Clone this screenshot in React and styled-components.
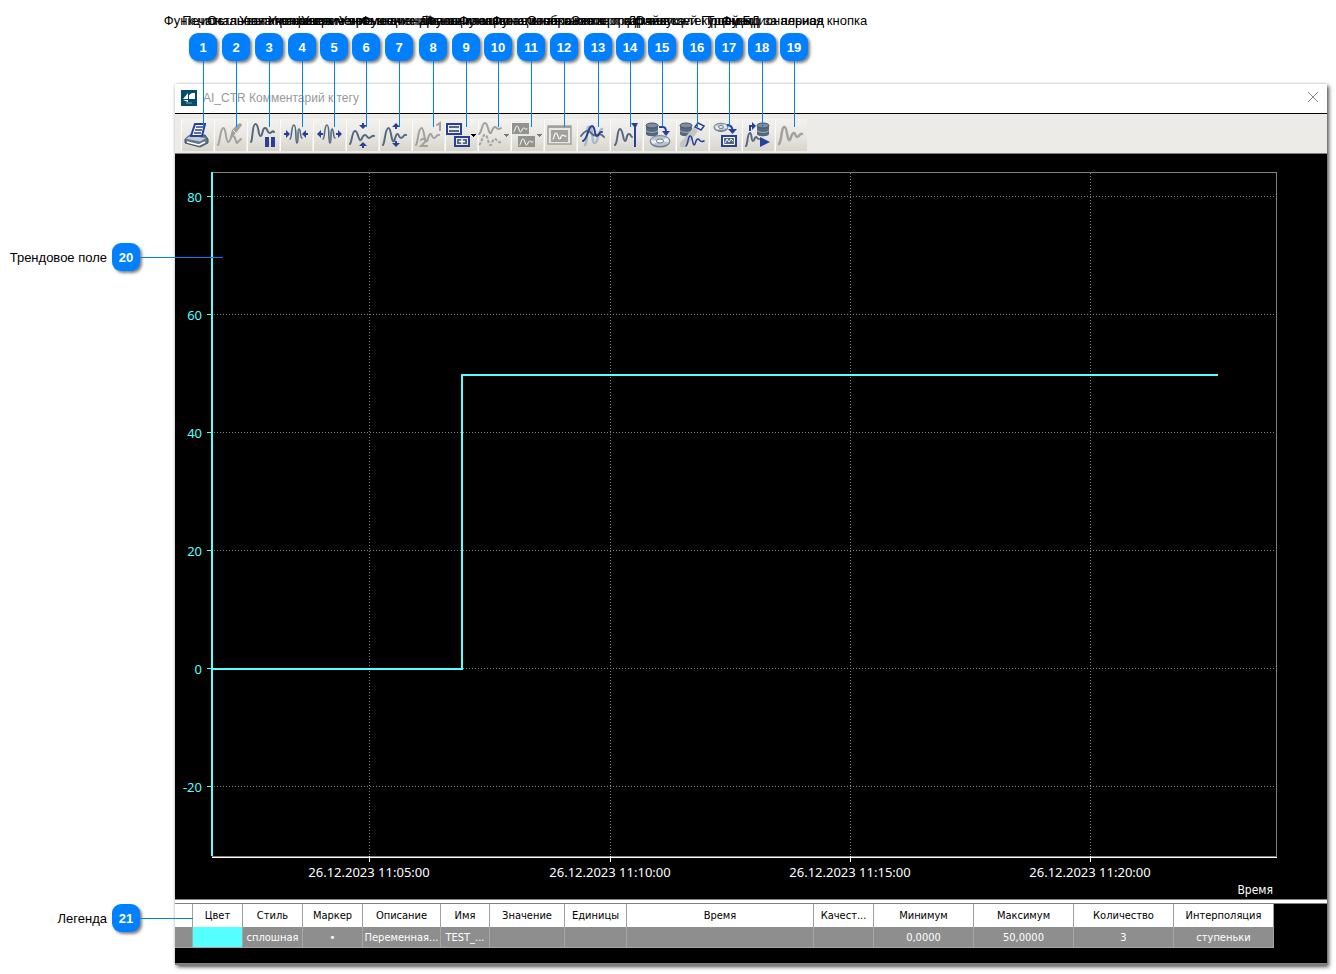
import React from "react";
import styled, { createGlobalStyle } from "styled-components";

const BLUE = "#0080ff";
const NAVY = "#27409c";
const SLATE = "#55697e";
const GRAY = "#a2a19e";
const CYAN = "#55ffff";

const GlobalStyle = createGlobalStyle`
  * { box-sizing: border-box; }
  body { margin: 0; background: #fff; }
`;

const Page = styled.main`
  position: relative;
  padding: 84px 9px 9px 175px;
  font-family: "DejaVu Sans Condensed", "Noto Sans", sans-serif;
  overflow: hidden;
`;

const TrendWindow = styled.section`
  display: flex;
  flex-direction: column;
  background: #000;
  border-bottom: 2px solid #808080;
  box-shadow: 2px 2px 4px rgba(0, 0, 0, 0.65), 0 0 3px rgba(0, 0, 0, 0.15);
`;

const TitleBar = styled.header`
  display: flex;
  align-items: center;
  gap: 6px;
  height: 30px;
  padding: 0 8px 2px 6px;
  background: #fff;
  border-bottom: 1px solid #000;
`;

const Title = styled.h1`
  flex: 1;
  margin: 0;
  font: 400 12px/16px "Liberation Sans", sans-serif;
  color: #999;
`;

const CloseButton = styled.button`
  display: flex;
  padding: 0;
  border: 0;
  background: none;
`;

const Toolbar = styled.div`
  display: flex;
  gap: 1px;
  height: 40px;
  padding: 5px 6px 2px;
  background: #ecebe7;
  border-bottom: 1px solid #808080;
`;

const ToolButton = styled.button`
  width: 32px;
  height: 32px;
  padding: 0;
  border: 0;
  background: linear-gradient(#f3f2ef, #e9e7e2 50%, #d8d5cc);
  box-shadow: inset 1px 0 #fbfbf9;
  svg { display: block; }
`;

const ChartPane = styled.div`
  padding: 18px 50px 43px 37px;
`;

const Chart = styled.svg`
  display: block;
  width: 100%;
  height: 684px;
  overflow: visible;
  shape-rendering: crispEdges;
`;

const ChartText = styled.text`
  font: 13px "Noto Sans", sans-serif;
  fill: ${(p) => p.$color};
  text-anchor: ${(p) => p.$anchor};
`;

const AxisTitle = styled(ChartText)`
  font: 12px "DejaVu Sans Condensed", "Noto Sans", sans-serif;
`;

const LegendPane = styled.div`
  border-top: 1px solid #808080;
  padding-bottom: 15px;
`;

const Splitter = styled.div`
  height: 4px;
  background: #fff;
  border-bottom: 1px solid #808080;
`;

const LegendTable = styled.table`
  width: 1099px;
  table-layout: fixed;
  border-collapse: separate;
  border-spacing: 0;
  font-size: 11px;
  line-height: 16px;
  text-align: center;
`;

const HeadCell = styled.th`
  height: 23px;
  padding: 1px 2px 0;
  font-weight: 400;
  color: #000;
  background: #fff;
  border-right: 1px solid #a0a0a0;
  overflow: hidden;
  white-space: nowrap;
`;

const Cell = styled.td`
  height: 21px;
  padding: 1px 1px 0;
  color: #fff;
  background: ${(p) => p.$fill || "#8e8e8e"};
  border-right: 1px solid #a6a6a6;
  border-bottom: 1px solid #a6a6a6;
  overflow: hidden;
  white-space: nowrap;
`;

const Badge = styled.span`
  display: flex;
  flex: none;
  align-items: center;
  justify-content: center;
  width: 28px;
  height: 28px;
  padding-top: 1px;
  border-radius: 9px;
  background: ${BLUE};
  box-shadow: 2px 2px 3px rgba(0, 0, 0, 0.5);
  color: #fff;
  font: 700 13px/17px "Liberation Sans", sans-serif;
`;

const CalloutText = styled.span`
  color: #000;
  font: 400 13px/16px "Liberation Sans", sans-serif;
  white-space: nowrap;
`;

const TopCallout = styled.div`
  position: absolute;
  top: 13px;
  left: ${(p) => p.$x - 100}px;
  width: 201px;
  display: flex;
  flex-direction: column;
  align-items: center;
  gap: 4px;
  pointer-events: none;
  ${Badge} { margin-right: 1px; }
  &::after {
    content: "";
    width: 1px;
    height: 66px;
    margin-top: -4px;
    background: ${BLUE};
  }
`;

const SideCallout = styled.div`
  position: absolute;
  left: 0;
  top: ${(p) => p.$y - 14}px;
  display: flex;
  align-items: center;
  pointer-events: none;
  ${CalloutText} { width: 107px; margin-right: 5px; padding-top: 2px; text-align: right; }
  &::after {
    content: "";
    width: ${(p) => p.$reach}px;
    height: 1px;
    margin-top: 1px;
    background: ${BLUE};
  }
`;

const WAVE = "M4 26C6 24 6 9 9.500 9C12 9 12 20 14 22C16 24 16 15 18.500 15C20 15 20 19 22 19C24 19 25 15 27 16";
const LOW = "M4 25C6 23 6 12 9 12C12 12 12 20 14 21C16 22 16 16 19 16C21 16 21 19 23 19C25 19 26 16 28 17";
const TIGHT = "M10 20C12 20 11 6 14 6C17 6 15 24 17 24C19 24 17 10 19 10C21 10 20 19 22 19";
const MINI = "M0 8C1 8 1 2 3 2C5 2 5 8 6.500 8C8 8 8 4 9.500 4C11 4 11 6 13 5";

function Line({ d, c = SLATE, w = 2, ...rest }) {
  return <path d={d} fill="none" stroke={c} strokeWidth={w} strokeLinecap="round" {...rest} />;
}
function Cylinder({ x, y }) {
  return (
    <g transform={`translate(${x} ${y})`}>
      <path d="M0 2.500V11C0 14 12 14 12 11V2.500Z" fill={SLATE} />
      <ellipse cx="6" cy="2.500" rx="6" ry="2.500" fill="#7d8e9e" stroke="#435566" />
      <path d="M0 7.500C2 10 10 10 12 7.500" fill="none" stroke="#c2cbd3" strokeWidth=".7" />
    </g>
  );
}
function Disc({ x, y, r }) {
  return (
    <g transform={`translate(${x} ${y})`}>
      <ellipse cy="1" rx={r} ry={r * 0.56} fill="#63778a" />
      <ellipse rx={r} ry={r * 0.54} fill="#b9c5cf" stroke="#728496" />
      <path d={`M${-r + 1} -1L0 0L${-r + 3} 3ZM${r - 1} 1L0 0L${r - 3} -3Z`} fill="#eef2f5" />
      <ellipse rx={r * 0.35} ry={r * 0.2} fill="#fff" stroke="#63778a" />
    </g>
  );
}
const Caret = ({ c }) => <path d="M26 15H31V16H30V17H29V18H28V17H27V16H26Z" fill={c} />;

const icons = [
  <g>
    <path d="M4 20L9 16H24L27 20V24L19 28L4 24Z" fill="#63768a" stroke="#415366" />
    <path d="M4 20L10 16L26 19L19 23Z" fill="#c3cdd5" stroke="#55697e" strokeWidth=".7" />
    <path d="M14 5H24L21 17H10Z" fill="#fff" stroke={NAVY} strokeWidth="2" />
    <path d="M15 8H22M14 11H21M13 14H20" stroke={NAVY} strokeWidth="1.500" />
    <path d="M6 23L18 26L24 23" fill="none" stroke="#fff" strokeWidth="1.500" />
  </g>,
  <g><Line d="M4 26C6 24 6 9 9.500 9C12 9 12 23 14 23C17 23 16 17 19 17C22 17 21 23 23 24L27 20" c={GRAY} /><path d="M16 18L18 11L24 5Q27 3 28 6L23 13L18 18Z" fill={GRAY} /><path d="M19 11L22 14" stroke="#eee" /></g>,
  <g><Line d="M4 23C6 20 5 5 8.500 5C12 5 11 17 13.500 17C16 17 15 9 18 9C21 9 20 14 22.500 14C25 14 25 11 27 13" /><path d="M18 18H22V28H18ZM24 18H28V28H24Z" fill={NAVY} /></g>,
  <g><Line d={TIGHT} w={1.600} /><path d="M4 14H6V11L10 15L6 19V16H4ZM28 14H26V11L22 15L26 19V16H28Z" fill={NAVY} /></g>,
  <g><Line d={TIGHT} w={1.600} /><path d="M10 14H8V11L4 15L8 19V16H10ZM23 14H25V11L29 15L25 19V16H23Z" fill={NAVY} /></g>,
  <g><Line d={LOW} /><path d="M16 4H18V6H21L17 10L13 6H16ZM16 29H18V27H21L17 23L13 27H16Z" fill={NAVY} /></g>,
  <g><Line d={WAVE} /><path d="M17 4L21 8H18V10H16V8H13ZM17 28L21 24H18V22H16V24H13Z" fill={NAVY} /></g>,
  <g><Line d={WAVE} c={GRAY} /><Line d="M25 6L28 4V11M9 21C12 18 15 21 12 24L9 27H15" c={GRAY} /></g>,
  <g>
    <path d="M2 5H16V15H2ZM10 18H24V27H10Z" fill="#e9edf0" stroke={NAVY} strokeWidth="2" />
    <path d="M4 7H14V9H4ZM4 11H14V13H4ZM12 20H22V25H12Z" fill={SLATE} />
    <path d="M17 20V25M14 22.500H20" stroke="#fff" strokeWidth="1.500" /><Caret c="#000" />
  </g>,
  <g><Line d="M1 15C4 13 4 4 7 4C10 4 10 13 12 14C14 15 14 8 17 8C19 8 19 12 23 9" c={GRAY} w={2} /><Line d="M1 26C4 24 4 16 7 16C10 16 10 25 12 26C14 27 14 20 17 20C19 20 19 24 23 23" c={GRAY} w={2} strokeDasharray="3 1.500" strokeLinecap="butt" /><Caret c="#777" /></g>,
  <g><path d="M1 4H18V15H1ZM7 17H24V28H7Z" fill="#92928f" /><Line d={MINI} c="#fff" w={1} transform="translate(3 5)" /><Line d={MINI} c="#fff" w={1} transform="translate(9 18)" /><Caret c="#777" /></g>,
  <g><path d="M4 7H27V25H4Z" fill="#e7e6e1" stroke={GRAY} strokeWidth="1.500" /><path d="M4 7H27V9H4ZM7 11H24V23H7Z" fill={GRAY} /><Line d={MINI} c="#fff" w={1.200} transform="translate(9 12)" /></g>,
  <g><Line d="M8 26C12 20 8 6 13 8C17 11 14 25 18 24C22 23 20 12 25 10" c="#acb9c7" w={2.500} /><Line d="M4 17C9 10 12 11 15 15C20 20 22 11 27 18" /><Line d="M6 22C11 20 11 7 15 7C19 8 17 17 20 17C22 17 22 12 25 13" c={NAVY} /></g>,
  <g><Line d="M5 26C8 23 7 10 10 10C13 10 13 22 15 22C17 22 16 15 19 15C21 15 21 18 22 18" /><path d="M21 4H28L26 8V28H24V8Z" fill={NAVY} /></g>,
  <g><Cylinder x={3} y={4} /><Disc x={17} y={22} r={10} /><Line d="M16 8H20Q23 8 23 13" c={NAVY} strokeLinecap="butt" /><path d="M19 12H27L23 17Z" fill={NAVY} /></g>,
  <g><Cylinder x={4} y={4} /><path d="M4 24L18 8L22 12L10 28H4Z" fill="#c5c5c2" /><path d="M19 8L22 4L28 7L25 11Z" fill="#fff" stroke={NAVY} strokeWidth="1.500" /><Line d="M10 27C12 26 12 17 14 17C17 17 16 25 18 26C20 26 19 20 22 20C24 20 23 24 28 22" c={NAVY} w={1.500} /></g>,
  <g><Disc x={12} y={8} r={7} /><Line d="M18 6Q23 6 23.500 11" c={NAVY} strokeLinecap="butt" /><path d="M19 10H28L23.500 15Z" fill={NAVY} /><path d="M13 17H27V27H13Z" fill={SLATE} stroke={NAVY} strokeWidth="2" /><path d="M14.500 18.500H25.500V25.500H14.500Z" fill={SLATE} stroke="#fff" /><Line d="M16 24L18 20L20 23L22 20L24 22" c="#fff" w={1} /></g>,
  <g><Cylinder x={15} y={4} /><Line d="M8 12V7H11" c={NAVY} strokeLinecap="butt" /><path d="M10 3V11L14 7Z" fill={NAVY} /><Line d="M4 27C6 25 5 14 8 14C10 14 9 22 11 22C13 22 12 18 14 18C15 18 15 20 17 20" w={2} /><path d="M18 18L28 23L18 28Z" fill={NAVY} /></g>,
  <Line d="M4 25C7 22 6 8 9.500 8C12 8 12 20 14 21C16 22 16 14 19 14C21 14 20 18 22 18C24 18 25 14 27 15" c={GRAY} w={2.500} />,
];

const FN = "Функциональная кнопка";
const callouts = [
  [203, "Печать"],
  [236, FN],
  [269, "Остановка графиков"],
  [302, "Увеличение времени"],
  [334, "Уменьшение времени"],
  [366, "Увеличение значений"],
  [399, "Уменьшение шкалы"],
  [433, FN],
  [466, "Дополнительно"],
  [498, FN],
  [531, FN],
  [564, FN],
  [598, "Отображение графиков"],
  [630, "Экспорт в файл csv"],
  [662, "До текущей"],
  [697, "Очистка текущей БД"],
  [729, "Тренды"],
  [762, "Просмотр за период"],
  [794, FN],
];

const columns = [
  [18, "", ""], [50, "Цвет", ""], [60, "Стиль", "сплошная"], [60, "Маркер", "•"],
  [78, "Описание", "Переменная..."], [49, "Имя", "TEST_..."], [75, "Значение", ""],
  [62, "Единицы", ""], [187, "Время", ""], [60, "Качест...", ""],
  [100, "Минимум", "0,0000"], [100, "Максимум", "50,0000"],
  [100, "Количество", "3"], [100, "Интерполяция", "ступеньки"],
];

const PLOT_HEIGHT = 684;
const yOf = (v) => 497 - v * 5.9;
const pct = (n) => `${(n / 1065) * 100}%`;
const timeTicks = [
  [157, "26.12.2023 11:05:00"], [398, "26.12.2023 11:10:00"],
  [638, "26.12.2023 11:15:00"], [878, "26.12.2023 11:20:00"],
];

function TrendChart() {
  return (
    <Chart role="img" aria-label="Тренд AI_CTR">
      <rect x="0" y="0" width={pct(1064)} height={PLOT_HEIGHT} fill="none" stroke="#808080" />
      {[80, 60, 40, 20, 0, -20].map((v) => (
        <g key={v}>
          <line x1="2" x2={pct(1062)} y1={yOf(v) - 1} y2={yOf(v) - 1} stroke="#808080" strokeDasharray="1 2" />
          <line x1="-5" x2="0" y1={yOf(v) - 1} y2={yOf(v) - 1} stroke={CYAN} />
          <ChartText x="-10" y={yOf(v) + 5} $color={CYAN} $anchor="end">{v}</ChartText>
        </g>
      ))}
      {timeTicks.map(([x, label]) => (
        <g key={label}>
          <line x1={pct(x)} x2={pct(x)} y1="1" y2={PLOT_HEIGHT} stroke="#808080" strokeDasharray="1 2" />
          <line x1={pct(x)} x2={pct(x)} y1={PLOT_HEIGHT} y2={PLOT_HEIGHT + 6} stroke="#fff" />
          <ChartText x={pct(x)} y={PLOT_HEIGHT + 21} $color="#fff" $anchor="middle">{label}</ChartText>
        </g>
      ))}
      <line x1="0" x2="100%" y1={PLOT_HEIGHT + 1} y2={PLOT_HEIGHT + 1} stroke="#fff" />
      <line x1="0" x2="0" y1="0" y2={PLOT_HEIGHT} stroke={CYAN} strokeWidth="2" />
      <g stroke={CYAN} strokeWidth="2">
        <line x1="0" x2={pct(251)} y1={yOf(0)} y2={yOf(0)} />
        <line x1={pct(250)} x2={pct(250)} y1={yOf(50) + 1} y2={yOf(0)} />
        <line x1={pct(249)} x2={pct(1006)} y1={yOf(50) + 1} y2={yOf(50) + 1} />
      </g>
      <AxisTitle x="100%" dx="-4" y={PLOT_HEIGHT + 38} $color="#fff" $anchor="end">Время</AxisTitle>
    </Chart>
  );
}

export default function App() {
  return (
    <Page>
      <GlobalStyle />
      <TrendWindow>
        <TitleBar>
          <svg width="16" height="16" aria-hidden="true">
            <rect width="16" height="16" fill="#074b6c" />
            <path d="M2 9L7 3V9ZM8 9V5L11 3H14V9ZM2 10H7V12Z" fill="#fff" />
            <path d="M5 13H11" stroke="#7ba0b2" />
          </svg>
          <Title>AI_CTR Комментарий к тегу</Title>
          <CloseButton aria-label="Закрыть">
            <svg width="12" height="12"><path d="M1 0L11 10M11 0L1 10" stroke="#888" /></svg>
          </CloseButton>
        </TitleBar>
        <Toolbar role="toolbar">
          {icons.map((icon, i) => (
            <ToolButton key={i} aria-label={callouts[i][1]}>
              <svg width="32" height="32">{icon}</svg>
            </ToolButton>
          ))}
        </Toolbar>
        <ChartPane><TrendChart /></ChartPane>
        <LegendPane>
          <Splitter />
          <LegendTable>
            <colgroup>{columns.map(([w], i) => <col key={i} width={w} />)}</colgroup>
            <thead><tr>{columns.map(([, h], i) => <HeadCell key={i} scope="col">{h}</HeadCell>)}</tr></thead>
            <tbody><tr>{columns.map(([, , v], i) => <Cell key={i} $fill={i === 1 ? CYAN : undefined}>{v}</Cell>)}</tr></tbody>
          </LegendTable>
        </LegendPane>
      </TrendWindow>
      {callouts.map(([x, label], i) => (
        <TopCallout key={x} $x={x}>
          <CalloutText>{label}</CalloutText>
          <Badge>{i + 1}</Badge>
        </TopCallout>
      ))}
      <SideCallout $y={257} $reach={83}><CalloutText>Трендовое поле</CalloutText><Badge>20</Badge></SideCallout>
      <SideCallout $y={918} $reach={53}><CalloutText>Легенда</CalloutText><Badge>21</Badge></SideCallout>
    </Page>
  );
}
